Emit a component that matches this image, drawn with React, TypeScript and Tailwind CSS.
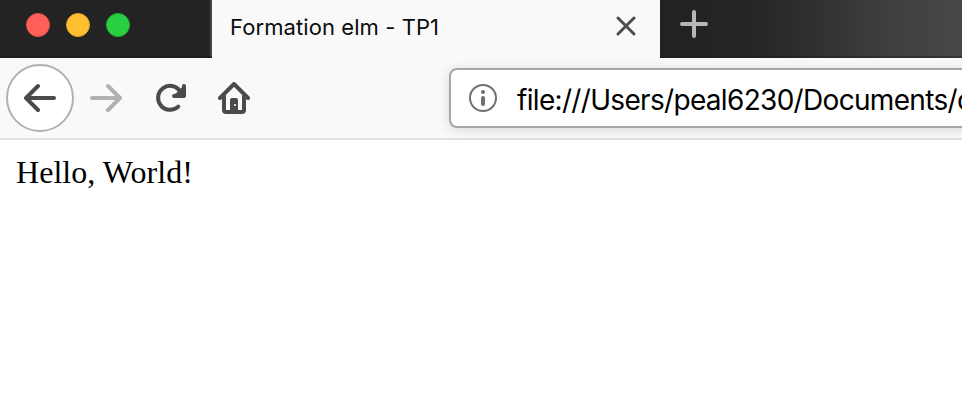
function TabBar() {
  return (
    <header className="flex h-[58px] bg-[#232323]">
      <div className="flex h-full w-[212px] items-start gap-4 border-r-2 border-b-2 border-r-[#454545] border-b-[#1c1a1b] bg-[#232323] pl-[26px] pt-[13px]">
        <span className="size-6 rounded-full border border-[#e2534b] bg-[#ff6159]" />
        <span className="size-6 rounded-full border border-[#e0a52c] bg-[#ffbf2f]" />
        <span className="size-6 rounded-full border border-[#1db331] bg-[#29ce42]" />
      </div>
      <div className="flex w-[448px] items-start justify-between bg-[#f9f9fa] pl-[18px] pr-6">
        <span className="pt-[11px] font-['Inter',sans-serif] text-[22px] leading-8 tracking-[0.08px] whitespace-nowrap text-[#0c0c0d]">
          Formation elm - TP1
        </span>
        <svg className="mt-4 size-5" viewBox="0 0 20 20" fill="none" stroke="#4d4d4d" strokeWidth="3" strokeLinecap="round">
          <path d="M2 2 18 18M18 2 2 18" />
        </svg>
      </div>
      <div className="flex-1 border-b-2 border-[#1c1a1b]/40 bg-[linear-gradient(to_right,#232120_0%,#262626_32%,#333333_56%,#404040_77%,#474747_100%)] pl-5 pt-[10px]">
        <svg className="size-7" viewBox="0 0 28 28" fill="none" stroke="#b7b7b7" strokeWidth="4" strokeLinecap="round">
          <path d="M14 2v24M2 14h24" />
        </svg>
      </div>
    </header>
  );
}

function Toolbar() {
  return (
    <nav className="flex h-[82px] items-start overflow-hidden border-b-2 border-[#e1e1e1] bg-[#f9f9fa] pl-[6px]">
      <button className="mt-[6px] flex size-[68px] shrink-0 items-center justify-center rounded-full border-2 border-[#b1b1b1] bg-white">
        <svg className="size-8" viewBox="0 0 32 32" fill="none" stroke="#4b4b4b" strokeWidth="4" strokeLinecap="round" strokeLinejoin="round">
          <path d="M30 16H3M14 4 2 16l12 12" />
        </svg>
      </button>
      <svg className="mt-6 ml-4 size-8 shrink-0" viewBox="0 0 32 32" fill="none" stroke="#b1b1b1" strokeWidth="4" strokeLinecap="round" strokeLinejoin="round">
        <path d="M2 16h27M18 4l12 12-12 12" />
      </svg>
      <svg className="mt-6 ml-8 size-8 shrink-0" viewBox="0 0 32 32" fill="none" stroke="#4b4b4b" strokeWidth="4" strokeLinecap="round" strokeLinejoin="round">
        <path d="M24.3 24.6A12 12 0 1 1 26 9.1" />
        <path d="M30 4v10H20" />
        <path d="M28 6v6h-6Z" fill="#4b4b4b" strokeWidth="1" />
      </svg>
      <svg className="mt-6 ml-8 size-8 shrink-0" viewBox="0 0 32 32" fill="none" stroke="#4b4b4b" strokeWidth="4" strokeLinecap="round" strokeLinejoin="round">
        <path d="M2 16 16 2l14 14" />
        <path d="M6 14v14q0 2 2 2h16q2 0 2-2V14" />
        <path d="M12 30V18q0-2 2-2h4q2 0 2 2v12Z" fill="#4b4b4b" stroke="none" />
        <path d="M16 22h2v2h-2z" fill="#d8d8d8" stroke="none" />
      </svg>
      <div className="mt-[10px] ml-[199px] flex h-[60px] w-[560px] shrink-0 items-center rounded-[8px] border-2 border-[#a6a6a6] bg-white pl-[18px] shadow-[0_2px_12px_rgba(0,0,0,0.13)]">
        <svg className="size-7 shrink-0" viewBox="0 0 28 28" fill="none" stroke="#707070" strokeWidth="2">
          <circle cx="14" cy="14" r="13" />
          <circle cx="14" cy="8" r="2" fill="#707070" stroke="none" />
          <path d="M14 14v6" strokeWidth="4" strokeLinecap="round" />
        </svg>
        <span className="ml-5 pt-[3px] font-['Inter',sans-serif] text-[28px] leading-9 tracking-[-0.68px] whitespace-nowrap text-black">
          file:///Users/peal6230/Documents/c
        </span>
      </div>
    </nav>
  );
}

export default function App() {
  return (
    <div className="h-[412px] w-[962px] overflow-hidden bg-white">
      <TabBar />
      <Toolbar />
      <main className="px-4 pt-[14px] font-['Liberation_Serif',serif] text-[32px] leading-9 tracking-[0.05px] text-black">
        <p>Hello, World!</p>
      </main>
    </div>
  );
}
